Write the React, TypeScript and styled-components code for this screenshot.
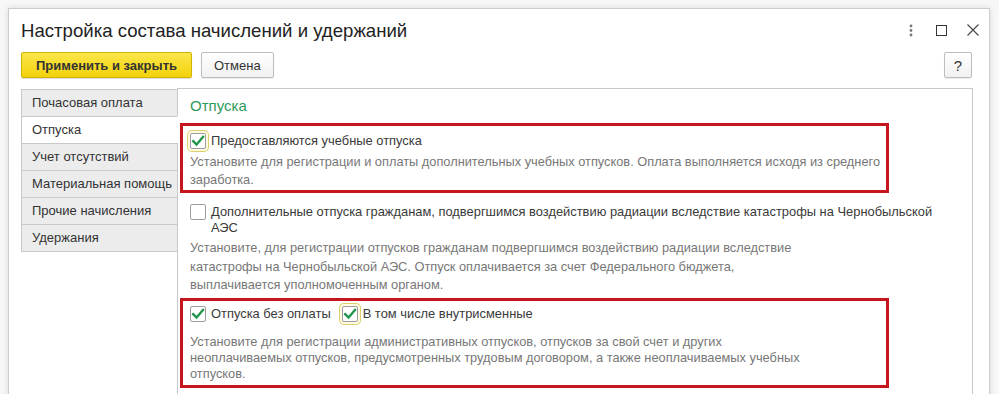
import React from "react";
import styled, { createGlobalStyle, css } from "styled-components";

const GlobalStyle = createGlobalStyle`
  html, body { margin: 0; padding: 0; }
  body {
    background: #f7f7f7;
    font-family: "Liberation Sans", Arial, sans-serif;
    color: #333;
    overflow: hidden;
  }
`;

const Page = styled.div`
  padding: 8px 0 0 8px;
  height: 394px;
  box-sizing: border-box;
`;

const Window = styled.div`
  width: 982px;
  height: 420px;
  box-sizing: border-box;
  background: #fff;
  border: 1px solid #cdcdcd;
  box-shadow: 0 0 6px rgba(0, 0, 0, 0.12);
  padding: 0 16px 0 12px;
`;

const Header = styled.div`
  display: flex;
  align-items: center;
  height: 24px;
  padding-top: 10px;
  margin-bottom: 9px;
`;

const Title = styled.div`
  flex: 1;
  font-size: 18.6px;
  color: #222;
  line-height: 24px;
`;

const WinIcons = styled.div`
  display: flex;
  align-items: center;
  gap: 14px;
  margin-right: -8px;
  margin-top: -2px;
`;

const IconBtn = styled.span`
  display: inline-flex;
  width: 17px;
  height: 17px;
  align-items: center;
  justify-content: center;
`;

const Toolbar = styled.div`
  display: flex;
  align-items: center;
  gap: 9px;
  height: 26px;
`;

const Button = styled.button<{ $primary?: boolean }>`
  height: 26px;
  box-sizing: border-box;
  font-family: "Liberation Sans", Arial, sans-serif;
  font-size: 13px;
  border-radius: 2px;
  padding: 0 12px;
  color: #333;
  cursor: pointer;
  ${(p) =>
    p.$primary
      ? css`
          width: 171px;
          font-weight: bold;
          background: linear-gradient(#fbe64a, #f3d20a);
          border: 1px solid #d2b300;
          box-shadow: 0 1px 1px rgba(0, 0, 0, 0.15);
        `
      : css`
          background: linear-gradient(#ffffff, #f1f1f1);
          border: 1px solid #bdbdbd;
          box-shadow: 0 1px 1px rgba(0, 0, 0, 0.08);
        `}
`;

const Spacer = styled.div`
  flex: 1;
`;

const HelpButton = styled(Button)`
  width: 28px;
  padding: 0;
  font-size: 15px;
  margin-right: 1px;
`;

const Main = styled.div`
  display: flex;
  margin-top: 10px;
  align-items: flex-start;
`;

const Tabs = styled.div`
  width: 157px;
  display: flex;
  flex-direction: column;
  padding-top: 1px;
  flex-shrink: 0;
`;

const Tab = styled.div<{ $active?: boolean }>`
  height: 26px;
  line-height: 25px;
  padding-left: 10px;
  font-size: 13px;
  color: #333;
  white-space: nowrap;
  border: 1px solid #c9c9c9;
  border-bottom: none;
  background: ${(p) => (p.$active ? "#fff" : "#ececec")};
  ${(p) =>
    p.$active &&
    css`
      border-right-color: #fff;
      position: relative;
      z-index: 1;
    `}
  &:last-child {
    border-bottom: 1px solid #c9c9c9;
  }
`;

const Panel = styled.div`
  flex: 1;
  margin-left: -1px;
  height: 320px;
  border: 1px solid #c9c9c9;
  border-bottom: none;
  padding-left: 1px;
`;

const Heading = styled.div`
  color: #2f9a5a;
  font-size: 15px;
  line-height: 20px;
  padding-left: 11px;
  margin-top: 7px;
  margin-bottom: 7px;
`;

const RedBox = styled.div<{ $pt: number; $pb: number }>`
  width: 709px;
  box-sizing: border-box;
  margin-left: 1px;
  border: 3px solid #c4161c;
  padding: ${(p) => p.$pt}px 7px ${(p) => p.$pb}px 7px;
`;

const Plain = styled.div`
  padding: 11px 0 3px 11px;
`;

const CheckRow = styled.div<{ $h?: number }>`
  display: flex;
  align-items: ${(p) => (p.$h ? "center" : "flex-start")};
  ${(p) => p.$h && css`height: ${p.$h}px;`}
  gap: 5px;
`;

const Label = styled.span<{ $gapAfter?: number }>`
  font-size: 12.9px;
  line-height: 16px;
  color: #3a3a3a;
  white-space: nowrap;
  ${(p) => p.$gapAfter && css`margin-right: ${p.$gapAfter}px;`}
`;

const Box = styled.span<{ $focus?: boolean }>`
  flex-shrink: 0;
  width: 16px;
  height: 16px;
  box-sizing: border-box;
  border: 1px solid #9d9d9d;
  border-radius: 2px;
  background: #fff;
  display: inline-flex;
  align-items: center;
  justify-content: center;
  ${(p) =>
    p.$focus &&
    css`
      box-shadow: 0 0 0 2px #fffbe3, 0 0 0 3px #ddd06a;
    `}
`;

const Desc = styled.div<{ $lh: number; $mt: number }>`
  font-size: 12.8px;
  color: #777;
  white-space: nowrap;
  line-height: ${(p) => p.$lh}px;
  margin-top: ${(p) => p.$mt}px;
`;

const Check = ({ checked, focus }: { checked?: boolean; focus?: boolean }) => (
  <Box $focus={focus}>
    {checked && (
      <svg width="14" height="14" viewBox="0 0 14 14">
        <path
          d="M2.2 7.2 L5.6 10.6 L12 3"
          fill="none"
          stroke="#23964c"
          strokeWidth="2.4"
          strokeLinecap="square"
        />
      </svg>
    )}
  </Box>
);

const lines = (arr: string[]) =>
  arr.map((l, i) => (
    <React.Fragment key={i}>
      {l}
      {i < arr.length - 1 && <br />}
    </React.Fragment>
  ));

export default function App() {
  return (
    <>
      <GlobalStyle />
      <Page>
        <Window>
          <Header>
            <Title>Настройка состава начислений и удержаний</Title>
            <WinIcons>
              <IconBtn>
                <svg width="4" height="13" viewBox="0 0 4 13">
                  <circle cx="2" cy="2" r="1.4" fill="#777" />
                  <circle cx="2" cy="6.5" r="1.4" fill="#777" />
                  <circle cx="2" cy="11" r="1.4" fill="#777" />
                </svg>
              </IconBtn>
              <IconBtn>
                <svg width="11" height="11" viewBox="0 0 11 11">
                  <rect x="0.5" y="0.5" width="10" height="10" fill="none" stroke="#333" strokeWidth="1" />
                </svg>
              </IconBtn>
              <IconBtn>
                <svg width="12" height="12" viewBox="0 0 12 12">
                  <path d="M0.5 0.5 L11.5 11.5 M11.5 0.5 L0.5 11.5" stroke="#444" strokeWidth="1.1" />
                </svg>
              </IconBtn>
            </WinIcons>
          </Header>
          <Toolbar>
            <Button $primary>Применить и закрыть</Button>
            <Button>Отмена</Button>
            <Spacer />
            <HelpButton>?</HelpButton>
          </Toolbar>
          <Main>
            <Tabs>
              <Tab>Почасовая оплата</Tab>
              <Tab $active>Отпуска</Tab>
              <Tab>Учет отсутствий</Tab>
              <Tab>Материальная помощь</Tab>
              <Tab>Прочие начисления</Tab>
              <Tab>Удержания</Tab>
            </Tabs>
            <Panel>
              <Heading>Отпуска</Heading>
              <RedBox $pt={5} $pb={1}>
                <CheckRow $h={20}>
                  <Check checked focus />
                  <Label>Предоставляются учебные отпуска</Label>
                </CheckRow>
                <Desc $lh={18} $mt={2}>
                  {lines([
                    "Установите для регистрации и оплаты дополнительных учебных отпусков. Оплата выполняется исходя из среднего",
                    "заработка.",
                  ])}
                </Desc>
              </RedBox>
              <Plain>
                <CheckRow>
                  <Check />
                  <Label>
                    {lines([
                      "Дополнительные отпуска гражданам, подвергшимся воздействию радиации вследствие катастрофы на Чернобыльской",
                      "АЭС",
                    ])}
                  </Label>
                </CheckRow>
                <Desc $lh={18.5} $mt={3}>
                  {lines([
                    "Установите, для регистрации отпусков гражданам подвергшимся воздействию радиации вследствие",
                    "катастрофы на Чернобыльской АЭС. Отпуск оплачивается за счет Федерального бюджета,",
                    "выплачивается уполномоченным органом.",
                  ])}
                </Desc>
              </Plain>
              <RedBox $pt={3} $pb={3}>
                <CheckRow $h={20}>
                  <Check checked />
                  <Label $gapAfter={6}>Отпуска без оплаты</Label>
                  <Check checked focus />
                  <Label>В том числе внутрисменные</Label>
                </CheckRow>
                <Desc $lh={16} $mt={10}>
                  {lines([
                    "Установите для регистрации административных отпусков, отпусков за свой счет и других",
                    "неоплачиваемых отпусков, предусмотренных трудовым договором, а также неоплачиваемых учебных",
                    "отпусков.",
                  ])}
                </Desc>
              </RedBox>
            </Panel>
          </Main>
        </Window>
      </Page>
    </>
  );
}
